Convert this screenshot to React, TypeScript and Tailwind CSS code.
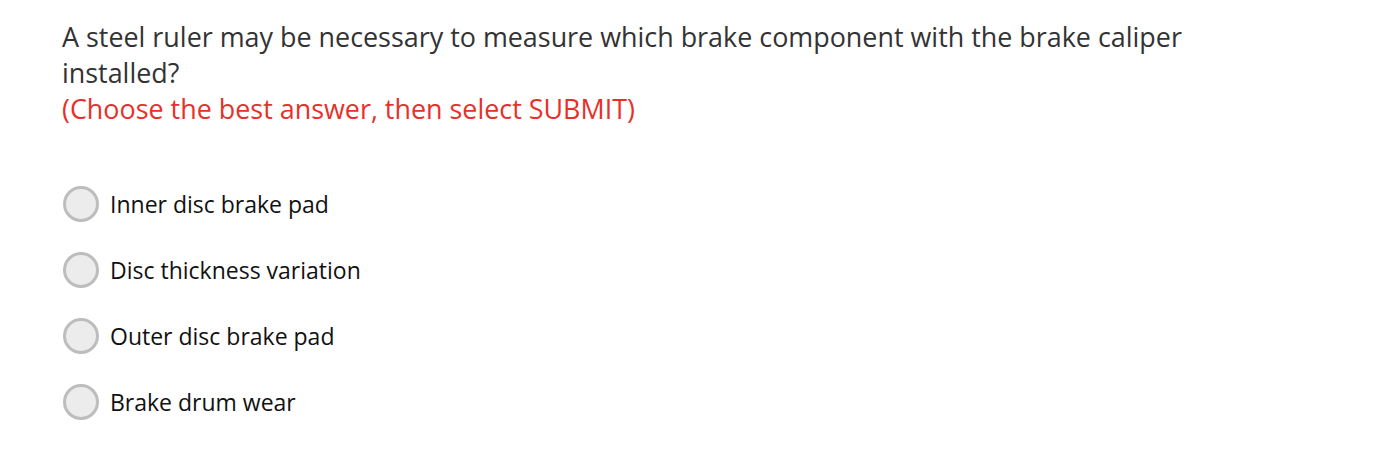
import React from "react";

const options = [
  "Inner disc brake pad",
  "Disc thickness variation",
  "Outer disc brake pad",
  "Brake drum wear",
];

export default function App() {
  return (
    <div
      className="w-[1394px] h-[462px] bg-white pl-[62px] pt-[19px]"
      style={{ fontFamily: '"Open Sans", sans-serif' }}
    >
      <div className="w-[1200px] text-[26.9px] leading-[36px] text-[#333333]">
        A steel ruler may be necessary to measure which brake component with the brake caliper installed?
      </div>
      <div className="text-[26.9px] leading-[36px] text-[#e8302a]">
        (Choose the best answer, then select SUBMIT)
      </div>
      <div className="mt-[59px] flex flex-col gap-[30px]">
        {options.map((o) => (
          <label key={o} className="flex items-center gap-[11px] h-[36px] pl-[1px]">
            <span className="w-[36px] h-[36px] rounded-full border-[3px] border-[#bdbdbd] bg-[#ececec] shrink-0" />
            <span className="text-[23px] text-[#111111]">{o}</span>
          </label>
        ))}
      </div>
    </div>
  );
}
